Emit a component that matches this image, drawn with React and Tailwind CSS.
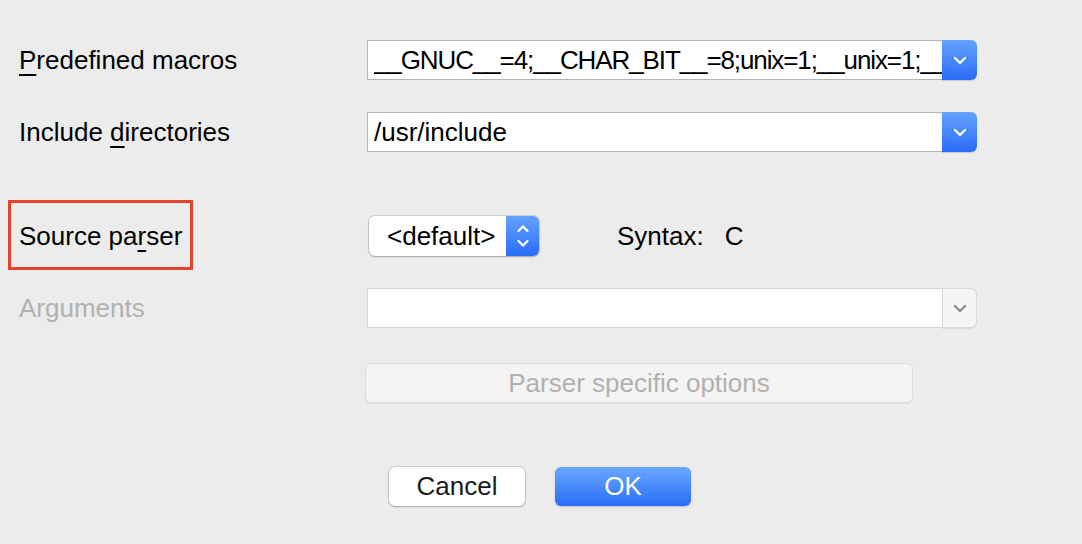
import React from "react";

const font = { fontFamily: '"Liberation Sans", Arial, sans-serif' };

function ChevronDown({ color = "#ffffff", w = 14 }) {
  return (
    <svg width={w} height="9" viewBox="0 0 14 9" fill="none">
      <polyline points="2,2 7,7 12,2" stroke={color} strokeWidth="2.4" strokeLinecap="round" strokeLinejoin="round" />
    </svg>
  );
}

function UpDown() {
  return (
    <svg width="14" height="26" viewBox="0 0 14 26" fill="none">
      <polyline points="2.5,8 7,3.5 11.5,8" stroke="#fff" strokeWidth="2.2" strokeLinecap="round" strokeLinejoin="round" />
      <polyline points="2.5,18 7,22.5 11.5,18" stroke="#fff" strokeWidth="2.2" strokeLinecap="round" strokeLinejoin="round" />
    </svg>
  );
}

function Combo({ text, disabled, tight }) {
  return (
    <div className="flex h-[40px] w-[610px]">
      <div
        className={
          "flex-1 min-w-0 flex items-center overflow-hidden whitespace-nowrap pl-[6px] text-[26px] border " +
          (tight ? "tracking-[-1.1px] " : "") +
          (disabled ? "bg-white border-[#d6d6d6] border-r-0" : "bg-white border-[#b5b5b5] border-r-0 text-black")
        }
      >
        <span className="overflow-hidden">{text}</span>
      </div>
      {disabled ? (
        <div className="w-[35px] h-full flex items-center justify-center rounded-r-[6px] bg-[#f4f4f4] border border-[#dadada] shadow-[0_1px_1px_rgba(0,0,0,0.08)]">
          <ChevronDown color="#8c8c8c" />
        </div>
      ) : (
        <div className="w-[35px] h-full flex items-center justify-center rounded-r-[6px] bg-gradient-to-b from-[#64a2fd] to-[#2a6cf8] shadow-[0_1px_1px_rgba(0,0,0,0.15)]">
          <ChevronDown />
        </div>
      )}
    </div>
  );
}

function Label({ children, disabled, extra }) {
  return (
    <div
      className={
        "relative w-[367px] h-full flex items-center pl-[19px] text-[26px] " +
        (disabled ? "text-[#b2b2b2]" : "text-black")
      }
    >
      <span>{children}</span>
      {extra}
    </div>
  );
}

const U = ({ children }) => (
  <span className="underline decoration-[1.5px] underline-offset-[5px]">{children}</span>
);

export default function App() {
  return (
    <div style={font} className="w-[1082px] h-[544px] bg-[#ececec] overflow-hidden flex flex-col pt-[40px]">
      <div className="flex items-center h-[40px]">
        <Label>
          <U>P</U>redefined macros
        </Label>
        <Combo tight text="__GNUC__=4;__CHAR_BIT__=8;unix=1;__unix=1;__u" />
      </div>

      <div className="flex items-center h-[40px] mt-[32px]">
        <Label>
          Include <U>d</U>irectories
        </Label>
        <Combo text="/usr/include" />
      </div>

      <div className="flex items-center h-[40px] mt-[64px]">
        <Label
          extra={
            <span className="absolute left-[8px] top-[-16px] w-[185px] h-[70px] border-[3px] border-[#e5432b]"></span>
          }
        >
          Source pa<U>r</U>ser
        </Label>
        <div className="ml-[2px] flex h-[40px] w-[170px] rounded-[6px] bg-white shadow-[0_0_0_1px_rgba(0,0,0,0.12),0_1px_2px_rgba(0,0,0,0.2)] overflow-hidden">
          <div className="flex-1 flex items-center pl-[18px] text-[26px] text-black">&lt;default&gt;</div>
          <div className="w-[33px] flex items-center justify-center bg-gradient-to-b from-[#64a2fd] to-[#2a6cf8]">
            <UpDown />
          </div>
        </div>
        <div className="ml-[78px] text-[26px] text-black">Syntax:</div>
        <div className="ml-[21px] text-[26px] text-black">C</div>
      </div>

      <div className="flex items-center h-[40px] mt-[32px]">
        <Label disabled>Arguments</Label>
        <Combo text="" disabled />
      </div>

      <div className="flex h-[40px] mt-[35px] pl-[365px]">
        <div className="w-[548px] h-[40px] rounded-[6px] bg-[#f4f4f4] border border-[#dcdcdc] shadow-[0_1px_1px_rgba(0,0,0,0.06)] flex items-center justify-center text-[26px] text-[#b0b0b0]">
          Parser specific options
        </div>
      </div>

      <div className="flex h-[39px] mt-[64px] pl-[389px] gap-[30px]">
        <div className="w-[136px] h-[39px] rounded-[6px] bg-white shadow-[0_0_0_1px_rgba(0,0,0,0.13),0_1px_2px_rgba(0,0,0,0.2)] flex items-center justify-center text-[26px] text-[#1a1a1a]">
          Cancel
        </div>
        <div className="w-[136px] h-[39px] rounded-[6px] bg-gradient-to-b from-[#6aa7fd] to-[#2a6cf8] shadow-[0_1px_2px_rgba(0,0,0,0.2)] flex items-center justify-center text-[26px] text-white">
          OK
        </div>
      </div>
    </div>
  );
}
